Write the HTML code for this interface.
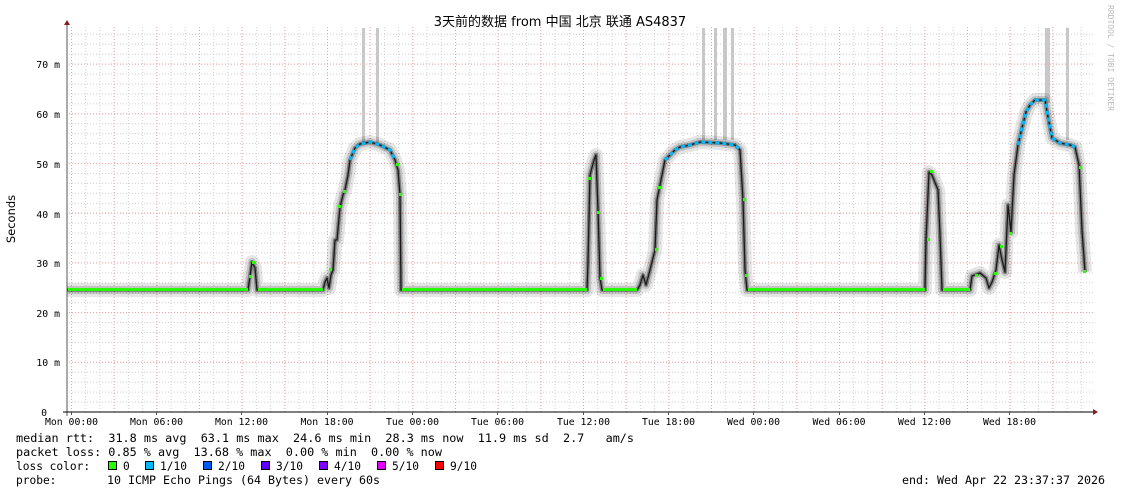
<!DOCTYPE html>
<html><head><meta charset="utf-8"><style>
html,body{margin:0;padding:0;background:#fff;width:1121px;height:494px;overflow:hidden}
svg{display:block}
.m{font-family:"DejaVu Sans Mono","Liberation Mono",monospace;font-size:11.2px;fill:#000}
.a{font-family:"DejaVu Sans Mono","Liberation Mono",monospace;font-size:9.8px;fill:#000}
.s{font-family:"DejaVu Sans","Liberation Sans","Noto Sans CJK SC",sans-serif}
</style></head><body>
<svg width="1121" height="494" viewBox="0 0 1121 494" xmlns="http://www.w3.org/2000/svg">
<defs>
<pattern id="vm" width="14.222" height="3" patternUnits="userSpaceOnUse" x="71" y="0"><rect width="1" height="1" fill="#cfcfcf"/></pattern>
<pattern id="hm" width="3" height="9.94" patternUnits="userSpaceOnUse" x="0" y="411.5"><rect width="1" height="1" fill="#cfcfcf"/></pattern>
<pattern id="vr" width="42.667" height="3" patternUnits="userSpaceOnUse" x="71" y="0"><rect width="1" height="1" fill="#f0a0a0"/></pattern>
<pattern id="hr" width="3" height="49.7" patternUnits="userSpaceOnUse" x="0" y="411.5"><rect width="1" height="1" fill="#f0a0a0"/></pattern>
<path id="p" d="M67 290 H248 L250 276 252 262 255 268 257 290 H323 L325 282 327 278 329 288 331 275 333 270 335 240 337 240 340 207 343 195 345 190 348 175 350 160 355 148 360 144 370 142 380 145 390 150 395 160 398 170 400 195 401 290 H587 L588 262 590 175 594 160 596 155 598 210 600 278 602 290 H637 L640 285 643 275 646 285 650 270 655 250 657 200 660 185 665 160 670 155 675 150 680 147 690 145 700 142 720 143 735 145 740 150 743 200 745 270 747 290 H925 L926 240 929 172 932 175 938 190 940 235 942 290 H970 L972 276 980 273 986 278 989 288 992 282 996 270 999 245 1002 260 1005 272 1008 205 1011 232 1014 175 1018 145 1022 128 1026 112 1030 105 1035 100 1045 100 1048 117 1052 138 1060 143 1070 145 1075 147 1079 165 1082 230 1085 272"/>
</defs>
<rect width="1121" height="494" fill="#fff"/>
<rect x="68" y="26" width="1026" height="386" fill="url(#vm)"/>
<rect x="68" y="26" width="1026" height="386" fill="url(#hm)"/>
<rect x="68" y="26" width="1026" height="386" fill="url(#vr)"/>
<rect x="68" y="26" width="1026" height="386" fill="url(#hr)"/>

<text x="560" y="26" text-anchor="middle" class="s" font-size="13">3天前的数据 from 中国 北京 联通 AS4837</text>
<text transform="translate(15,219) rotate(-90)" text-anchor="middle" class="s" font-size="11.5">Seconds</text>
<text transform="translate(1108,5) rotate(90)" font-family="DejaVu Sans Mono,monospace" font-size="8" fill="#bbb">RRDTOOL / TOBI OETIKER</text>

<g fill="#c8c8c8">
<rect x="362" y="28" width="3" height="115"/><rect x="376" y="28" width="3" height="115"/>
<rect x="702" y="28" width="3" height="112"/><rect x="714" y="28" width="3" height="112"/>
<rect x="723" y="28" width="4" height="112"/><rect x="731" y="28" width="3" height="112"/>
<rect x="1045" y="28" width="5" height="75"/><rect x="1066" y="28" width="3" height="112"/>
</g>
<g fill="none" stroke-linejoin="round">
<use href="#p" stroke="#000" stroke-opacity="0.1" stroke-width="14"/>
<use href="#p" stroke="#000" stroke-opacity="0.15" stroke-width="8"/>
<use href="#p" stroke="#000" stroke-opacity="0.35" stroke-width="4"/>
<use href="#p" stroke="#1a1a1a" stroke-width="1.3"/>
</g>
<g stroke="#26ff00" stroke-width="3" fill="none">
<path d="M68 289.5 H248 M258 289.5 H323 M402 289.5 H587 M603 289.5 H637 M748 289.5 H925 M943 289.5 H970"/>
</g>
<g stroke="#00b8ff" stroke-width="3" fill="none" stroke-dasharray="4 3">
<path d="M350 160 L355 148 360 144 370 142 380 145 390 150 395 160"/>
<path d="M665 160 L670 155 675 150 680 147 690 145 700 142 720 143 735 145 740 150"/>
<path d="M1018 145 L1022 128 1026 112 1030 105 1035 100 1045 100 1048 117 1052 138 1060 143 1070 145 1075 147"/>
</g>
<g fill="#26ff00">
<rect x="249" y="275" width="3" height="3"/><rect x="252" y="261" width="3" height="3"/><rect x="329" y="268" width="3" height="3"/><rect x="343" y="190" width="3" height="3"/><rect x="338" y="205" width="3" height="3"/><rect x="396" y="163" width="3" height="3"/><rect x="399" y="193" width="3" height="3"/>
<rect x="588" y="177" width="3" height="3"/><rect x="597" y="211" width="3" height="3"/><rect x="600" y="277" width="3" height="3"/><rect x="655" y="248" width="3" height="3"/><rect x="658" y="186" width="3" height="3"/><rect x="743" y="198" width="3" height="3"/><rect x="745" y="274" width="3" height="3"/>
<rect x="927" y="238" width="3" height="3"/><rect x="930" y="170" width="3" height="3"/><rect x="975" y="274" width="3" height="3"/><rect x="994" y="272" width="3" height="3"/><rect x="1000" y="245" width="3" height="3"/><rect x="1009" y="232" width="3" height="3"/><rect x="1079" y="166" width="3" height="3"/><rect x="1083" y="270" width="3" height="3"/>
</g>

<line x1="67" y1="24" x2="67" y2="416" stroke="#555" stroke-width="1"/>
<line x1="63" y1="412" x2="1094" y2="412" stroke="#000" stroke-width="1"/>
<path d="M64 25 L67 20 70 25Z" fill="#8b1a1a"/>
<path d="M1093 409 L1098 412 1093 415Z" fill="#8b1a1a"/>
<g stroke="#555"><path d="M71.5 412v3M156.5 412v3M241.5 412v3M327.5 412v3M412.5 412v3M497.5 412v3M583.5 412v3M668.5 412v3M753.5 412v3M839.5 412v3M924.5 412v3M1009.5 412v3"/></g>

<g class="a" text-anchor="end">
<text x="60" y="68">70 m</text><text x="60" y="118">60 m</text><text x="60" y="168">50 m</text><text x="60" y="218">40 m</text><text x="60" y="267">30 m</text><text x="60" y="317">20 m</text><text x="60" y="366">10 m</text><text x="47" y="416">0</text>
</g>
<g class="a" text-anchor="middle">
<text x="71.5" y="425">Mon 00:00</text><text x="156.5" y="425">Mon 06:00</text><text x="241.5" y="425">Mon 12:00</text><text x="327" y="425">Mon 18:00</text><text x="412.5" y="425">Tue 00:00</text><text x="497.5" y="425">Tue 06:00</text><text x="583.5" y="425">Tue 12:00</text><text x="668.5" y="425">Tue 18:00</text><text x="753.5" y="425">Wed 00:00</text><text x="839" y="425">Wed 06:00</text><text x="924.5" y="425">Wed 12:00</text><text x="1009.5" y="425">Wed 18:00</text>
</g>
<g class="m">
<text x="16" y="442" textLength="618" lengthAdjust="spacingAndGlyphs">median rtt:&#160; 31.8 ms avg&#160; 63.1 ms max&#160; 24.6 ms min&#160; 28.3 ms now&#160; 11.9 ms sd&#160; 2.7&#160;&#160; am/s</text>
<text x="16" y="456" textLength="426" lengthAdjust="spacingAndGlyphs">packet loss: 0.85 % avg&#160; 13.68 % max&#160; 0.00 % min&#160; 0.00 % now</text>
<text x="16" y="470">loss color:</text>
<text x="123" y="470">0</text><text x="160" y="470">1/10</text><text x="218" y="470">2/10</text><text x="276" y="470">3/10</text><text x="334" y="470">4/10</text><text x="392" y="470">5/10</text><text x="450" y="470">9/10</text>
<text x="16" y="484">probe:</text>
<text x="107" y="484" textLength="273" lengthAdjust="spacingAndGlyphs">10 ICMP Echo Pings (64 Bytes) every 60s</text>
<text x="902" y="484" textLength="203" lengthAdjust="spacingAndGlyphs">end: Wed Apr 22 23:37:37 2026</text>
</g>
<g stroke="#000" stroke-width="1">
<rect x="108.5" y="461.5" width="8" height="8" fill="#26ff00"/>
<rect x="145.5" y="461.5" width="8" height="8" fill="#00b8ff"/>
<rect x="203.5" y="461.5" width="8" height="8" fill="#0059ff"/>
<rect x="261.5" y="461.5" width="8" height="8" fill="#5e00ff"/>
<rect x="319.5" y="461.5" width="8" height="8" fill="#7e00ff"/>
<rect x="377.5" y="461.5" width="8" height="8" fill="#dd00ff"/>
<rect x="435.5" y="461.5" width="8" height="8" fill="#ff0000"/>
</g>
</svg>
</body></html>
